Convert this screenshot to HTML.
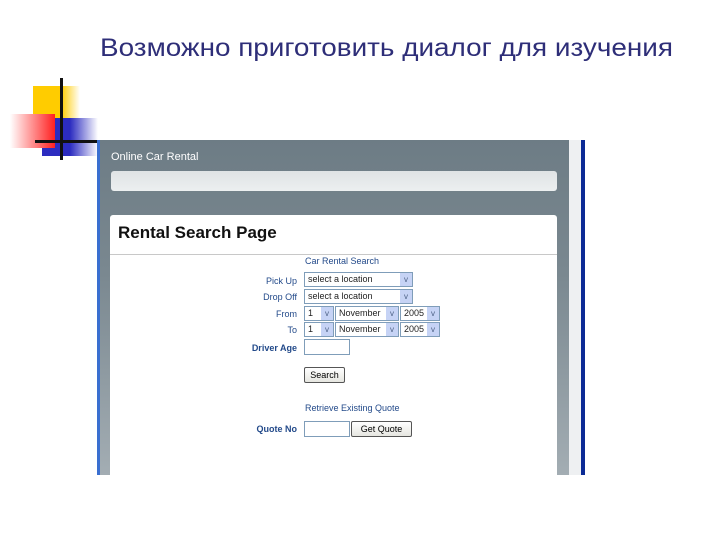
<!DOCTYPE html>
<html><head><meta charset="utf-8"><style>
body{margin:0;width:720px;height:540px;background:#fff;position:relative;overflow:hidden;font-family:"Liberation Sans","DejaVu Sans",sans-serif}
.a{position:absolute}
.t{left:100px;top:34px;font-size:25px;color:#2e2e78;white-space:nowrap;transform:scaleX(1.115);transform-origin:0 0}
.lbl{position:absolute;font-size:9px;color:#234a8a;text-align:right;width:120px}
.sel{position:absolute;height:13px;border:1px solid #7f9db9;background:#fff;font-size:9px;line-height:13px;padding-left:3px;box-sizing:content-box;color:#222}
.sel i{position:absolute;right:0;top:0;width:12px;height:13px;background:#c6d3f5;font-style:normal;font-size:8px;text-align:center;color:#4d6185;line-height:13px}
.btn{position:absolute;border:1px solid #555;border-radius:2px;background:linear-gradient(#fff,#e6e6e0);font-size:9px;text-align:center;line-height:14px;height:14px}
.inp{position:absolute;border:1px solid #7f9db9;background:#fff;height:14px}
</style></head><body>
<div class="a t">Возможно приготовить диалог для изучения</div>
<div class="a" style="left:33px;top:86px;width:47px;height:32px;background:linear-gradient(90deg,#ffcc00 60%,#fff)"></div>
<div class="a" style="left:42px;top:118px;width:56px;height:38px;background:linear-gradient(90deg,#2c2cc0 50%,#fff)"></div>
<div class="a" style="left:10px;top:114px;width:45px;height:34px;background:linear-gradient(270deg,#ff2020,#fff)"></div>
<div class="a" style="left:60px;top:78px;width:3px;height:82px;background:#111"></div>
<div class="a" style="left:35px;top:140px;width:62px;height:3px;background:#111"></div>

<div class="a" style="left:97px;top:140px;width:3px;height:335px;background:#3a6fd0"></div>
<div class="a" style="left:100px;top:140px;width:469px;height:335px;background:linear-gradient(#6d7c85,#7a8890 40%,#a3adb3)"></div>
<div class="a" style="left:569px;top:140px;width:12px;height:335px;background:#eef0f2"></div>
<div class="a" style="left:581px;top:140px;width:4px;height:335px;background:#0b2a95"></div>
<div class="a" style="left:111px;top:151px;font-size:11px;color:#fff">Online Car Rental</div>
<div class="a" style="left:111px;top:171px;width:446px;height:20px;border-radius:3px;background:linear-gradient(#dfe3e5,#eceff0)"></div>
<div class="a" style="left:110px;top:215px;width:447px;height:260px;background:#fff;border-radius:3px 3px 0 0"></div>
<div class="a" style="left:118px;top:223px;font-size:17px;font-weight:bold;color:#111">Rental Search Page</div>
<div class="a" style="left:110px;top:254px;width:447px;height:1px;background:#c8c8c8"></div>
<div class="a" style="left:305px;top:256px;font-size:9px;color:#234a8a">Car Rental Search</div>
<div class="lbl" style="left:177px;top:276px">Pick Up</div>
<div class="lbl" style="left:177px;top:292px">Drop Off</div>
<div class="lbl" style="left:177px;top:309px">From</div>
<div class="lbl" style="left:177px;top:325px">To</div>
<div class="lbl" style="left:177px;top:343px;font-weight:bold">Driver Age</div>
<div class="lbl" style="left:177px;top:424px;font-weight:bold">Quote No</div>
<div class="sel" style="left:304px;top:272px;width:104px">select a location<i>v</i></div>
<div class="sel" style="left:304px;top:289px;width:104px">select a location<i>v</i></div>
<div class="sel" style="left:304px;top:306px;width:25px">1<i>v</i></div>
<div class="sel" style="left:335px;top:306px;width:59px">November<i>v</i></div>
<div class="sel" style="left:400px;top:306px;width:35px">2005<i>v</i></div>
<div class="sel" style="left:304px;top:322px;width:25px">1<i>v</i></div>
<div class="sel" style="left:335px;top:322px;width:59px">November<i>v</i></div>
<div class="sel" style="left:400px;top:322px;width:35px">2005<i>v</i></div>
<div class="inp" style="left:304px;top:339px;width:44px"></div>
<div class="btn" style="left:304px;top:367px;width:39px">Search</div>
<div class="a" style="left:305px;top:403px;font-size:9px;color:#234a8a">Retrieve Existing Quote</div>
<div class="inp" style="left:304px;top:421px;width:44px"></div>
<div class="btn" style="left:351px;top:421px;width:59px">Get Quote</div>
</body></html>
